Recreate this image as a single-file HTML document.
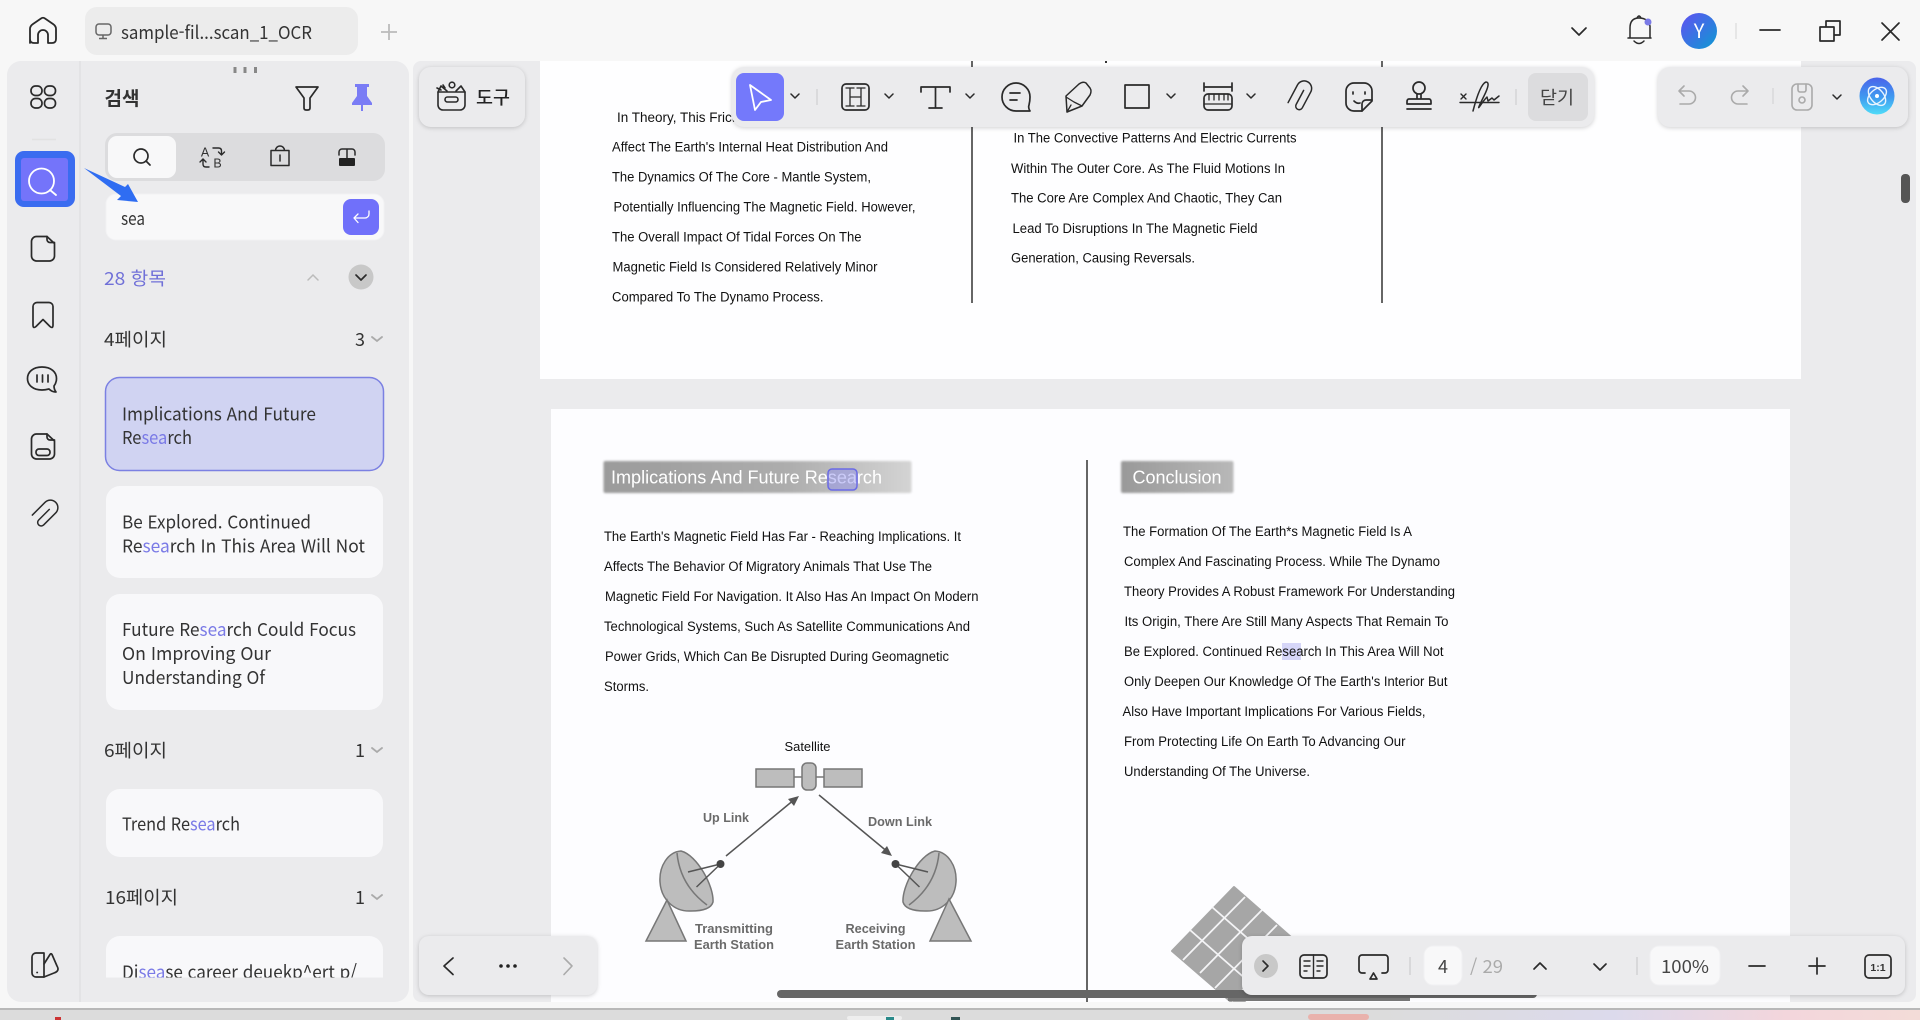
<!DOCTYPE html>
<html lang="ko"><head><meta charset="utf-8"><title>sample-fil...scan_1_OCR</title>
<style>
html,body{margin:0;padding:0;width:1920px;height:1020px;overflow:hidden;background:#f7f7f7}
svg{display:block;position:absolute;left:0;top:0}
.b{font:13.5px "Liberation Sans",Arial,sans-serif;fill:#111}
.s{font:18px "Noto Sans CJK KR","Liberation Sans",sans-serif;fill:#333}
.h{font:18px "Liberation Sans",Arial,sans-serif;fill:#fff}
.d{font:bold 12.5px "Liberation Sans",Arial,sans-serif;fill:#6a6a6a;text-anchor:middle}
.k{font:18px "Noto Sans CJK KR","Liberation Sans",sans-serif;fill:#333}
.i{fill:none;stroke:#2a2a2a;stroke-width:1.7;stroke-linecap:round;stroke-linejoin:round}
.g{fill:none;stroke:#aaa;stroke-width:1.6;stroke-linecap:round;stroke-linejoin:round}
.m{fill:#7a7ae6}
.p{fill:#ebebed;filter:drop-shadow(0 1px 2px rgba(0,0,0,.18))}
.bl{filter:blur(1px)}
</style></head><body>
<svg width="1920" height="1020" viewBox="0 0 1920 1020" xmlns="http://www.w3.org/2000/svg">
<defs>
<linearGradient id="hb" x1="0" x2="1" y1="0" y2="0"><stop offset="0" stop-color="#9b9b9b"/><stop offset=".6" stop-color="#adadad"/><stop offset="1" stop-color="#d4d4d4"/></linearGradient>
<linearGradient id="hc" x1="0" x2="1" y1="0" y2="0"><stop offset="0" stop-color="#999"/><stop offset="1" stop-color="#b8b8b8"/></linearGradient>
<linearGradient id="av" x1="0" x2="1" y1="0" y2="1"><stop offset="0" stop-color="#6150f2"/><stop offset="1" stop-color="#0d9ad2"/></linearGradient>
<linearGradient id="ai" x1="0" x2="0" y1="0" y2="1"><stop offset="0" stop-color="#4a63ea"/><stop offset=".55" stop-color="#3f9cf0"/><stop offset="1" stop-color="#4fdcf8"/></linearGradient>
<linearGradient id="st" x1="0" x2="1" y1="0" y2="0"><stop offset="0" stop-color="#dcdcdc"/><stop offset=".72" stop-color="#dcdcdc"/><stop offset=".84" stop-color="#dcdaec"/><stop offset=".93" stop-color="#f3d6dc"/><stop offset="1" stop-color="#f3dcd8"/></linearGradient>
<clipPath id="c5"><rect x="100" y="930" width="290" height="47.5"/></clipPath>
<clipPath id="p2"><rect x="551" y="409" width="1239" height="593"/></clipPath>
</defs>

<!-- backgrounds -->
<rect x="0" y="0" width="1920" height="1020" fill="#f7f7f7"/>
<rect x="0" y="1008" width="1920" height="2" fill="#b8b8b8"/>
<rect x="0" y="1010" width="1920" height="10" fill="url(#st)"/>
<rect x="847" y="1016" width="55" height="4" rx="2" fill="#eee"/>
<rect x="886" y="1017" width="8" height="3" fill="#2a8a8a"/>
<rect x="951" y="1017" width="9" height="3" fill="#355"/>
<rect x="1308" y="1014" width="61" height="6" rx="3" fill="#e9b2ac"/>
<rect x="55" y="1017" width="6" height="3" fill="#c33"/>
<rect x="413" y="61" width="1503" height="941" rx="8" fill="#ebebed"/>
<rect x="7" y="61" width="402" height="941" rx="14" fill="#ebebed"/>
<rect x="79" y="61" width="2" height="941" fill="#e3e3e5"/>

<!-- page 1 -->
<rect x="540" y="61" width="1261" height="318" fill="#fefeff"/>
<path d="M972 61V303M1382 61V303" stroke="#666" stroke-width="2"/>
<rect x="1105" y="61" width="2" height="2" fill="#333"/>
<text class="b" x="617" y="122">In Theory, This Friction</text>
<text class="b" x="612" y="151.500" textLength="276" lengthAdjust="spacingAndGlyphs">Affect The Earth's Internal Heat Distribution And</text>
<text class="b" x="612" y="181.500" textLength="259" lengthAdjust="spacingAndGlyphs">The Dynamics Of The Core - Mantle System,</text>
<text class="b" x="613.500" y="211.500" textLength="302" lengthAdjust="spacingAndGlyphs">Potentially Influencing The Magnetic Field. However,</text>
<text class="b" x="612" y="241.500" textLength="249.500" lengthAdjust="spacingAndGlyphs">The Overall Impact Of Tidal Forces On The</text>
<text class="b" x="612.500" y="271.500" textLength="265" lengthAdjust="spacingAndGlyphs">Magnetic Field Is Considered Relatively Minor</text>
<text class="b" x="612" y="301.500" textLength="211.500" lengthAdjust="spacingAndGlyphs">Compared To The Dynamo Process.</text>
<text class="b" x="1013.500" y="142.500" textLength="283" lengthAdjust="spacingAndGlyphs">In The Convective Patterns And Electric Currents</text>
<text class="b" x="1011" y="173" textLength="274" lengthAdjust="spacingAndGlyphs">Within The Outer Core. As The Fluid Motions In</text>
<text class="b" x="1011" y="202.500" textLength="271" lengthAdjust="spacingAndGlyphs">The Core Are Complex And Chaotic, They Can</text>
<text class="b" x="1012.500" y="233" textLength="245" lengthAdjust="spacingAndGlyphs">Lead To Disruptions In The Magnetic Field</text>
<text class="b" x="1011" y="262.500" textLength="184" lengthAdjust="spacingAndGlyphs">Generation, Causing Reversals.</text>

<!-- page 2 -->
<rect x="551" y="409" width="1239" height="593" fill="#fdfdff"/>
<path d="M1087 460V1002" stroke="#666" stroke-width="2"/>
<rect class="bl" x="603.500" y="461" width="308" height="32" rx="2" fill="url(#hb)"/>
<rect class="bl" x="1121" y="461" width="112.500" height="32" rx="2" fill="url(#hc)"/>
<text class="h" x="611" y="483.500" textLength="271" lengthAdjust="spacingAndGlyphs">Implications And Future Research</text>
<text class="h" x="1132.500" y="483.500" textLength="89" lengthAdjust="spacingAndGlyphs">Conclusion</text>
<rect x="828" y="469" width="29" height="21" rx="4" fill="#8b8bf0" fill-opacity=".45" stroke="#6a6ae6" stroke-width="1.500"/>
<text class="b" x="604" y="541" textLength="357" lengthAdjust="spacingAndGlyphs">The Earth's Magnetic Field Has Far - Reaching Implications. It</text>
<text class="b" x="604" y="571" textLength="328" lengthAdjust="spacingAndGlyphs">Affects The Behavior Of Migratory Animals That Use The</text>
<text class="b" x="605" y="601" textLength="373.500" lengthAdjust="spacingAndGlyphs">Magnetic Field For Navigation. It Also Has An Impact On Modern</text>
<text class="b" x="604" y="631" textLength="366" lengthAdjust="spacingAndGlyphs">Technological Systems, Such As Satellite Communications And</text>
<text class="b" x="605" y="661" textLength="344" lengthAdjust="spacingAndGlyphs">Power Grids, Which Can Be Disrupted During Geomagnetic</text>
<text class="b" x="604" y="691" textLength="45" lengthAdjust="spacingAndGlyphs">Storms.</text>
<rect x="1282" y="643" width="19" height="17" fill="#d6d6f8"/>
<text class="b" x="1123" y="536" textLength="289" lengthAdjust="spacingAndGlyphs">The Formation Of The Earth*s Magnetic Field Is A</text>
<text class="b" x="1124" y="566" textLength="316" lengthAdjust="spacingAndGlyphs">Complex And Fascinating Process. While The Dynamo</text>
<text class="b" x="1124" y="596" textLength="331" lengthAdjust="spacingAndGlyphs">Theory Provides A Robust Framework For Understanding</text>
<text class="b" x="1124.500" y="626" textLength="324" lengthAdjust="spacingAndGlyphs">Its Origin, There Are Still Many Aspects That Remain To</text>
<text class="b" x="1124" y="656" textLength="319.500" lengthAdjust="spacingAndGlyphs">Be Explored. Continued Research In This Area Will Not</text>
<text class="b" x="1124" y="686" textLength="323.500" lengthAdjust="spacingAndGlyphs">Only Deepen Our Knowledge Of The Earth's Interior But</text>
<text class="b" x="1122.500" y="716" textLength="303" lengthAdjust="spacingAndGlyphs">Also Have Important Implications For Various Fields,</text>
<text class="b" x="1124" y="746" textLength="281.500" lengthAdjust="spacingAndGlyphs">From Protecting Life On Earth To Advancing Our</text>
<text class="b" x="1124" y="776" textLength="186" lengthAdjust="spacingAndGlyphs">Understanding Of The Universe.</text>

<!-- diagram -->
<text class="b" x="784.500" y="751" textLength="46" lengthAdjust="spacingAndGlyphs" style="font-size:13px">Satellite</text>
<g fill="#bdbdbd" stroke="#777" stroke-width="1.500">
<rect x="756" y="769" width="38" height="18"/><rect x="824" y="769" width="38" height="18"/>
<path d="M794 777H802M816 777H824" fill="none"/>
<rect x="802" y="763" width="14" height="27" rx="5"/>
<path d="M681 851C668 852 659 866 660 882C661 899 674 912 691 911C701 911 711 909 713 902C714 886 697 855 681 851Z"/>
<path d="M935 851C948 852 957 866 956 882C955 899 942 912 925 911C915 911 905 909 903 902C902 886 919 855 935 851Z"/>
<path d="M667 900L646 941H686Z"/><path d="M949 899L930 941H971Z"/>
<path d="M677 853Q680 885 707 905M939 853Q936 885 909 905" fill="none"/>
</g>
<path d="M726 856L795 799M819 795L889 853M720.500 864L688 872M720.500 864L696.500 887M895.500 864L928 872M895.500 864L919.500 887" stroke="#555" stroke-width="1.500" fill="none"/>
<path d="M799 796L788 799L794 806ZM892 856L881 853L887 846Z" fill="#555"/>
<circle cx="720.500" cy="864" r="4" fill="#444"/><circle cx="895.500" cy="864" r="4" fill="#444"/>
<text class="d" x="726" y="822" textLength="46" lengthAdjust="spacingAndGlyphs">Up Link</text>
<text class="d" x="900" y="826" textLength="64" lengthAdjust="spacingAndGlyphs">Down Link</text>
<text class="d" x="734" y="933" textLength="78" lengthAdjust="spacingAndGlyphs">Transmitting</text>
<text class="d" x="734" y="949" textLength="80" lengthAdjust="spacingAndGlyphs">Earth Station</text>
<text class="d" x="875.500" y="933" textLength="60" lengthAdjust="spacingAndGlyphs">Receiving</text>
<text class="d" x="875.500" y="949" textLength="80" lengthAdjust="spacingAndGlyphs">Earth Station</text>
<g clip-path="url(#p2)">
<path d="M1234 887L1300 945L1238 1008L1172 951Z" fill="#a6a6a6" stroke="#a6a6a6" stroke-width="2" stroke-linejoin="round"/>
<path d="M1212 907L1278 965M1190 930L1256 988M1245 897L1183 960M1262 910L1200 973M1277 925L1215 988M1294 938L1232 1001" stroke="#f4f4f6" stroke-width="1.800" fill="none"/>
</g>

<!-- scrollbars -->
<rect x="1228" y="995" width="182" height="6" fill="#777"/>
<rect x="777" y="990" width="760" height="8" rx="4" fill="#666"/>
<rect x="1901" y="174" width="9" height="29" rx="4" fill="#555"/>

<!-- top bar -->
<path class="i" d="M30 43V29Q30 26 33 24L41 18.500Q43 17 45 18.500L53 24Q56 26 56 29V39Q56 43 52 43H48V35A5 5 0 0 0 38 35V43H34Q30 43 30 39Z" style="stroke-width:1.800"/>
<rect x="85" y="7" width="273" height="48" rx="12" fill="#ececec"/>
<rect x="96" y="24" width="15" height="11" rx="3" fill="none" stroke="#666" stroke-width="1.500"/>
<path d="M103 35V38M99 38.500H107" stroke="#666" stroke-width="1.500" fill="none"/>
<text class="s" x="121" y="39" textLength="191" lengthAdjust="spacingAndGlyphs">sample-fil...scan_1_OCR</text>
<path d="M389 24V40M381 32H397" stroke="#bbb" stroke-width="1.800"/>
<path class="i" d="M1572 28L1579 35L1586 28"/>
<path class="i" d="M1630 38V28Q1630 18 1639 18Q1648 18 1650 26V38M1628 38H1651M1634 41Q1639 46 1644 41M1637 18Q1639 14 1641 18" style="stroke-width:1.500"/>
<circle cx="1648" cy="22" r="3.500" fill="#7a7ae6"/>
<circle cx="1699" cy="31" r="18" fill="url(#av)"/>
<text x="1699" y="38" text-anchor="middle" style="font:20px 'Noto Sans CJK KR','Liberation Sans',sans-serif;fill:#fff">Y</text>
<path d="M1736 23V39" stroke="#e6e6e6" stroke-width="2"/>
<path class="i" d="M1760 30H1780"/>
<path class="i" d="M1820 27H1834V41H1820ZM1826 27V21H1840V35H1834" style="stroke-linecap:square"/>
<path class="i" d="M1882 23L1899 40M1899 23L1882 40"/>

<!-- left rail -->
<g class="i">
<rect x="31" y="86" width="11" height="9.500" rx="4.500"/><rect x="44.500" y="86" width="11" height="9.500" rx="4.500"/>
<rect x="31" y="98.500" width="11" height="9.500" rx="4.500"/><rect x="44.500" y="98.500" width="11" height="9.500" rx="4.500"/>
</g>
<path d="M32 139.500H56" stroke="#e2e2e2" stroke-width="1.500"/>
<rect x="15" y="151" width="60" height="56" rx="9" fill="#3a6cf0"/>
<rect x="21" y="158" width="47" height="43" rx="3" fill="#7474fa"/>
<circle cx="41.500" cy="181" r="12.500" fill="none" stroke="#fff" stroke-width="1.800"/>
<path d="M50 190L56 195" stroke="#fff" stroke-width="1.800" stroke-linecap="round"/>
<g class="i">
<path d="M36.500 236.500H47L54.500 243.500V256A5 5 0 0 1 49.500 261H36.500A5 5 0 0 1 31.500 256V241.500A5 5 0 0 1 36.500 236.500Z"/>
<path d="M47 236.500V239.500A3 3 0 0 0 50 242.500H54.500"/>
<path d="M37 302.500H49A4 4 0 0 1 53 306.500V325Q53 329 50 326.500L43 319.500L36 326.500Q33 329 33 325V306.500A4 4 0 0 1 37 302.500Z"/>
<path d="M42 367C33 367 27.500 372 27.500 378.500C27.500 385 33 390 42 390C45 390 47 389.500 49 389C51 391 53 392 56 392C54.500 390 54 388 54 386C55.500 384 56.500 381.500 56.500 378.500C56.500 372 51 367 42 367Z"/>
<path d="M37 375V382M42.500 375V382M48 375V382"/>
<path d="M36.500 434H47L54.500 441V454A5 5 0 0 1 49.500 459H36.500A5 5 0 0 1 31.500 454V439A5 5 0 0 1 36.500 434Z"/>
<path d="M47 434V437A3 3 0 0 0 50 440H54.500"/>
<rect x="36" y="449" width="14" height="6.500" rx="3"/>
<path transform="translate(0 2) rotate(45 44 512)" d="M44.500 505V520A3.500 3.500 0 0 0 51.500 520V503A7.500 7.500 0 0 0 36.500 503V521" style="stroke-width:1.500"/>
<path d="M36 953H44V977H36A4 4 0 0 1 32 973V957A4 4 0 0 1 36 953Z"/>
<path d="M44 964L50 954.500Q51 953 52 954.500L57 966Q60 971 54 973L44 977"/>
<path d="M37 972.500H37.300"/>
</g>

<!-- sidebar header -->
<path d="M233.500 67H236.500V73H233.500ZM243.500 67H246.500V73H243.500ZM254 67H257V73H254Z" fill="#888"/>
<text x="104.500" y="105" textLength="35" lengthAdjust="spacingAndGlyphs" style="font:bold 19px 'Noto Sans CJK KR','Liberation Sans',sans-serif;fill:#333">검색</text>
<path class="i" d="M296 87H318L310 98V108Q310 110 308 110H306Q304 110 304 108V98Z"/>
<path d="M355 84H369V87H367V96L372 103V105H352V103L357 96V87H355Z" fill="#7a7cf5"/>
<path d="M362 105V111" stroke="#7a7cf5" stroke-width="2"/>

<!-- segmented -->
<rect x="105" y="133" width="280" height="48" rx="12" fill="#dcdcde"/>
<rect x="108" y="136" width="68" height="42" rx="9" fill="#f8f8f9"/>
<circle cx="141" cy="156" r="7" class="i"/><path class="i" d="M146 161L150 165"/>
<text x="205" y="156.500" text-anchor="middle" style="font:12.500px 'Liberation Sans',sans-serif;fill:#333">A</text>
<text x="217.500" y="167.500" text-anchor="middle" style="font:12.500px 'Liberation Sans',sans-serif;fill:#333">B</text>
<path class="i" d="M213 148H218.500Q221.500 148 221.500 151V155M218.500 152L221.500 155L224.500 152M209 167H206Q203 167 203 164V159M200 162L203 159L206 162" style="stroke-width:1.400"/>
<path class="i" d="M271 150.500H289V165.500H271ZM275.500 150.500A4.500 4.500 0 0 1 284.500 150.500M280 155V161" style="stroke-width:1.500"/>
<path class="i" d="M339 155V152A3 3 0 0 1 342 149H352A3 3 0 0 1 355 152V155M347 149V158" style="stroke-width:1.500"/>
<rect x="339" y="158" width="16" height="8" fill="#222" rx="1"/>

<!-- input -->
<rect x="106" y="194" width="278" height="46" rx="10" fill="#f8f8f9" stroke="#f2f2f4"/>
<text class="s" x="121" y="225" textLength="24" lengthAdjust="spacingAndGlyphs">sea</text>
<rect x="343" y="199" width="36" height="36" rx="8" fill="#7070fa"/>
<path d="M369 211V214A4 4 0 0 1 365 218H354M358 214L354 218L358 222.500" fill="none" stroke="#fff" stroke-width="1.300" stroke-linecap="round" stroke-linejoin="round"/>

<!-- blue arrow -->
<path d="M84 168L125 187L128 184L138 202L117 200L121 196Z" fill="#2f6df2"/>

<!-- results -->
<text x="104" y="285" textLength="62" lengthAdjust="spacingAndGlyphs" style="font:18px 'Noto Sans CJK KR','Liberation Sans',sans-serif;fill:#7070d8">28 항목</text>
<path d="M308 280L313 275L318 280" fill="none" stroke="#bbb" stroke-width="1.500" stroke-linecap="round"/>
<circle cx="361" cy="277" r="12.500" fill="#c8c8c8"/>
<path class="i" d="M356 275L361 280L366 275"/>
<text class="k" x="104" y="346" textLength="63" lengthAdjust="spacingAndGlyphs">4페이지</text>
<text class="k" x="355" y="346">3</text>
<path d="M372 337L377 341L382 337" fill="none" stroke="#aaa" stroke-width="1.800" stroke-linecap="round"/>

<rect x="105.500" y="377.500" width="278" height="93" rx="14" fill="#d0d3f2" stroke="#7b80e2" stroke-width="1.500"/>
<text class="s" x="122" y="420.500" textLength="194" lengthAdjust="spacingAndGlyphs">Implications And Future</text>
<text class="s" x="122" y="444" textLength="70" lengthAdjust="spacingAndGlyphs">Re<tspan class="m">sea</tspan>rch</text>

<rect x="106" y="486" width="277" height="92" rx="14" fill="#f8f8fa"/>
<text class="s" x="122" y="528.500" textLength="189" lengthAdjust="spacingAndGlyphs">Be Explored. Continued</text>
<text class="s" x="122" y="552.500" textLength="243" lengthAdjust="spacingAndGlyphs">Re<tspan class="m">sea</tspan>rch In This Area Will Not</text>

<rect x="106" y="594" width="277" height="116" rx="14" fill="#f8f8fa"/>
<text class="s" x="122" y="636" textLength="234" lengthAdjust="spacingAndGlyphs">Future Re<tspan class="m">sea</tspan>rch Could Focus</text>
<text class="s" x="122" y="660" textLength="149" lengthAdjust="spacingAndGlyphs">On Improving Our</text>
<text class="s" x="122" y="684" textLength="143" lengthAdjust="spacingAndGlyphs">Understanding Of</text>

<text class="k" x="104" y="757" textLength="63" lengthAdjust="spacingAndGlyphs">6페이지</text>
<text class="k" x="355" y="757">1</text>
<path d="M372 748L377 752L382 748" fill="none" stroke="#aaa" stroke-width="1.800" stroke-linecap="round"/>

<rect x="106" y="789" width="277" height="68" rx="14" fill="#f8f8fa"/>
<text class="s" x="122" y="830.500" textLength="118" lengthAdjust="spacingAndGlyphs">Trend Re<tspan class="m">sea</tspan>rch</text>

<text class="k" x="105" y="904" textLength="73" lengthAdjust="spacingAndGlyphs">16페이지</text>
<text class="k" x="355" y="904">1</text>
<path d="M372 895L377 899L382 895" fill="none" stroke="#aaa" stroke-width="1.800" stroke-linecap="round"/>

<g clip-path="url(#c5)">
<rect x="106" y="936" width="277" height="68" rx="14" fill="#f8f8fa"/>
<text class="s" x="122" y="978.500" textLength="235" lengthAdjust="spacingAndGlyphs">Di<tspan class="m">sea</tspan>se career deuekp^ert p/</text>
</g>

<!-- 도구 panel -->
<rect class="p" x="419" y="67" width="106" height="60" rx="12"/>
<g class="i" style="stroke-width:1.600">
<path d="M438 92H465V105A5 5 0 0 1 460 110H443A5 5 0 0 1 438 105Z"/>
<rect x="445" y="97" width="13" height="5" rx="2.500"/>
<path d="M438 92L441 86L447 91M465 92L461 86L456 91M445 88L443 85M441 90L437 88"/>
<circle cx="452" cy="85" r="2.800"/>
</g>
<text x="476" y="104" textLength="34" lengthAdjust="spacingAndGlyphs" style="font:500 18px 'Noto Sans CJK KR','Liberation Sans',sans-serif;fill:#222">도구</text>

<!-- main toolbar -->
<rect class="p" x="732" y="67" width="862" height="60" rx="12"/>
<rect x="736" y="73" width="48" height="48" rx="8" fill="#7479fb"/>
<path d="M750 85L771 100L761 102L755 110Z" fill="none" stroke="#fff" stroke-width="1.800" stroke-linejoin="round"/>
<path d="M817 89V105M1516 89V105" stroke="#d4d4d6" stroke-width="1.500"/>
<g class="i">
<path d="M791 94L795 98L799 94M885 94L889 98L893 94M966 94L970 98L974 94M1167 94L1171 98L1175 94M1247 94L1251 98L1255 94" style="stroke-width:1.500"/>
<rect x="842" y="84" width="27" height="26" rx="4"/>
<path d="M850 88V106M861 88V106M850 97H861M846 88H854M857 88H865M846 106H854M857 106H865" style="stroke-width:1.300"/>
<path d="M921 92V87H950V92M935.500 87V108M929 108H942"/>
<path d="M1030 97A14 14 0 1 0 1016 111H1030Q1028 108 1029 105Q1030 101 1030 97Z"/>
<path d="M1010 93H1020M1010 100H1017"/>
<path d="M1079 84Q1083 81 1086 83L1090 88Q1092 91 1090 95L1082 106L1067 112L1066 96Z" style="stroke-width:1.500"/>
<path d="M1066 97L1074 102L1082 106M1067 112L1071 105" style="stroke-width:1.300"/>
<rect x="1125" y="85" width="24" height="23"/>
<path d="M1204 87H1232M1204 83V91M1232 83V91"/>
<rect x="1204" y="94" width="28" height="16" rx="4"/>
<path d="M1209 94V100M1214 94V100M1219 94V100M1224 94V100M1228 94V100M1204 104H1232" style="stroke-width:1.300"/>
<path transform="rotate(28 1299 97)" d="M1300 89V105A3.500 3.500 0 0 0 1307 105V87A7.500 7.500 0 0 0 1292 87V107" style="stroke-width:1.500"/>
<path d="M1354 83H1364A8 8 0 0 1 1372 91V101L1362 111H1354A8 8 0 0 1 1346 103V91A8 8 0 0 1 1354 83Z"/>
<path d="M1372 100H1366A4 4 0 0 0 1362 104V111M1353 92V94M1365 92V94M1354 101Q1357 104 1360 103"/>
<circle cx="1419" cy="88" r="6"/>
<path d="M1417 94V99H1421V94M1409 99H1429Q1431 99 1431 102V104H1407V102Q1407 99 1409 99ZM1407 109H1431"/>
<path d="M1460 102.500H1499" style="stroke-width:1.400"/>
<path d="M1461 94L1466 99M1466 94L1461 99" style="stroke-width:1.400"/>
<path d="M1473 111Q1480 84 1486 82Q1491 82 1484 96Q1476 112 1480 106Q1484 100 1487 97L1488 101L1492 98L1494 100L1499 96" style="stroke-width:1.500"/>
</g>
<rect x="1528" y="73" width="60" height="48" rx="8" fill="#dcdcde"/>
<text x="1557" y="104" text-anchor="middle" textLength="34" lengthAdjust="spacingAndGlyphs" style="font:18px 'Noto Sans CJK KR','Liberation Sans',sans-serif;fill:#444">닫기</text>

<!-- right toolbar -->
<rect class="p" x="1658" y="67" width="250" height="60" rx="12"/>
<g class="g">
<path d="M1684 86L1679 91L1684 96M1679 91H1689A6.500 6.500 0 0 1 1689 104H1680"/>
<path d="M1743 86L1748 91L1743 96M1748 91H1738A6.500 6.500 0 0 0 1738 104H1747"/>
<path d="M1797 84H1807A5 5 0 0 1 1812 89V105A5 5 0 0 1 1807 110H1797A5 5 0 0 1 1792 105V89A5 5 0 0 1 1797 84Z"/>
<path d="M1798 84V90A2 2 0 0 0 1800 92H1804A2 2 0 0 0 1806 90V84"/>
<circle cx="1802" cy="100" r="3"/>
</g>
<path d="M1773 88V104" stroke="#d8d8da" stroke-width="1.500"/>
<path class="i" d="M1833 95L1837 99L1841 95" style="stroke-width:1.500"/>
<ellipse cx="1877" cy="96" rx="17.500" ry="18.500" fill="url(#ai)"/>
<g fill="none" stroke="#e8f4ff" stroke-width="1.400">
<ellipse cx="1877" cy="96" rx="11" ry="6.500" transform="rotate(-40 1877 96)"/>
<ellipse cx="1877" cy="96" rx="6.500" ry="11" transform="rotate(-40 1877 96)"/>
</g>
<circle cx="1877" cy="96" r="2" fill="#fff"/>

<!-- bottom-left panel -->
<rect class="p" x="419" y="936" width="178" height="59" rx="10"/>
<path class="i" d="M453 958L444 966L453 974.500"/>
<circle cx="501" cy="966" r="1.800" fill="#222"/><circle cx="508" cy="966" r="1.800" fill="#222"/><circle cx="515" cy="966" r="1.800" fill="#222"/>
<path class="g" d="M564 958L572 966L564 974.500"/>

<!-- bottom-right panel -->
<rect class="p" x="1242" y="936" width="663" height="59" rx="10"/>
<circle cx="1266" cy="966" r="12" fill="#c8c8c8"/>
<path class="i" d="M1263 961L1268 966L1263 971" style="stroke-width:1.600"/>
<g class="i">
<rect x="1300" y="955" width="27" height="23" rx="4"/>
<path d="M1313.500 955V978M1304 961H1310M1304 966H1310M1304 971H1307M1317 961H1323M1317 966H1323M1317 971H1320" style="stroke-width:1.400"/>
<path d="M1365 973H1362A3 3 0 0 1 1359 970V958A3 3 0 0 1 1362 955H1385A3 3 0 0 1 1388 958V970A3 3 0 0 1 1385 973H1382"/>
<path d="M1373.500 973L1370 979H1377Z"/>
<path d="M1534 969L1540 963L1546 969M1594 964L1600 970L1606 964"/>
<path d="M1749 966H1765M1809 966H1825M1817 958V974"/>
<rect x="1865" y="955" width="26" height="23" rx="4"/>
</g>
<text x="1878" y="971" text-anchor="middle" style="font:bold 10.500px 'Liberation Sans',sans-serif;fill:#333">1:1</text>
<path d="M1410 957V975M1637 957V975" stroke="#d2d2d4" stroke-width="1.500"/>
<rect x="1424" y="946" width="38" height="39" rx="9" fill="#f8f8f9" stroke="#f0f0f2"/>
<text x="1443" y="973" text-anchor="middle" style="font:18px 'Noto Sans CJK KR','Liberation Sans',sans-serif;fill:#444">4</text>
<text x="1470" y="973" textLength="33" lengthAdjust="spacingAndGlyphs" style="font:18px 'Noto Sans CJK KR','Liberation Sans',sans-serif;fill:#aaa">/ 29</text>
<rect x="1650" y="946" width="70" height="39" rx="9" fill="#f8f8f9" stroke="#f0f0f2"/>
<text x="1685" y="973" text-anchor="middle" textLength="48" lengthAdjust="spacingAndGlyphs" style="font:18px 'Noto Sans CJK KR','Liberation Sans',sans-serif;fill:#444">100%</text>
</svg>
</body></html>
